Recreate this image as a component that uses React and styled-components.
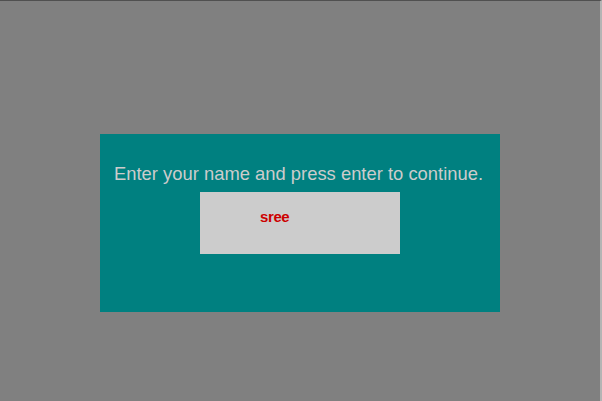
import React, { useState } from "react";
import styled, { createGlobalStyle } from "styled-components";

const GlobalStyle = createGlobalStyle`
  html, body {
    margin: 0;
    padding: 0;
    background-color: #808080;
  }
  * {
    box-sizing: border-box;
  }
`;

const Screen = styled.div`
  width: 602px;
  height: 401px;
  background-color: #808080;
  border-top: 1px solid #505050;
  border-right: 2px solid #b4b4b4;
  display: flex;
  flex-direction: column;
  align-items: flex-start;
  padding: 133px 0 0 100px;
  font-family: "Liberation Sans", Arial, sans-serif;
`;

const Dialog = styled.div`
  width: 400px;
  height: 178px;
  background-color: #008080;
  display: flex;
  flex-direction: column;
  align-items: center;
  padding-top: 29px;
`;

const Prompt = styled.div`
  color: #cccccc;
  font-size: 18.4px;
  line-height: 21px;
  white-space: nowrap;
  margin-right: 3px;
`;

const NameInput = styled.input`
  width: 200px;
  height: 62px;
  margin-top: 8px;
  padding: 0 0 14px 60px;
  background-color: #cccccc;
  border: none;
  outline: none;
  color: #cc0000;
  font-family: "Liberation Sans", Arial, sans-serif;
  font-size: 15px;
  font-weight: bold;
  letter-spacing: -0.4px;
`;

const App = () => {
  const [name, setName] = useState("sree");

  return (
    <>
      <GlobalStyle />
      <Screen>
        <Dialog>
          <Prompt>Enter your name and press enter to continue.</Prompt>
          <NameInput
            type="text"
            value={name}
            onChange={e => setName(e.target.value)}
            autoComplete="off"
          />
        </Dialog>
      </Screen>
    </>
  );
};

export default App;
